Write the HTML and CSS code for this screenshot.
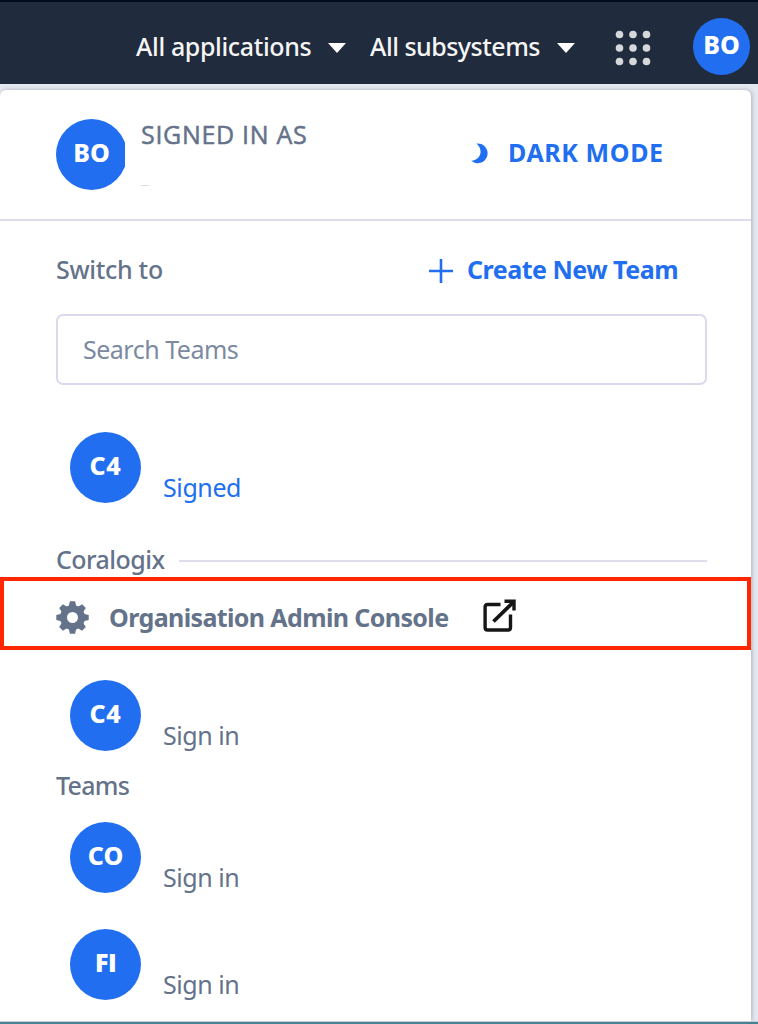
FILE: index.html
```html
<!DOCTYPE html>
<html lang="en">
<head>
<meta charset="utf-8">
<title>Teams</title>
<link rel="stylesheet" href="styles.css">
</head>
<body>
<header class="nav">
  <div class="filter apps"><span class="label apps-label">All applications</span><svg class="caret" width="18" height="10" viewBox="0 0 18 10"><path d="M0 0H18L9 10Z" fill="#fff"/></svg></div>
  <div class="filter subs"><span class="label subs-label">All subsystems</span><svg class="caret" width="18" height="10" viewBox="0 0 18 10"><path d="M0 0H18L9 10Z" fill="#fff"/></svg></div>
  <svg class="grid-icon" width="36" height="36" viewBox="0 0 36 36" fill="#d6d7da"><circle cx="4.5" cy="4.5" r="3.8"/><circle cx="18" cy="4.5" r="3.8"/><circle cx="31.5" cy="4.5" r="3.8"/><circle cx="4.5" cy="18" r="3.8"/><circle cx="18" cy="18" r="3.8"/><circle cx="31.5" cy="18" r="3.8"/><circle cx="4.5" cy="31.5" r="3.8"/><circle cx="18" cy="31.5" r="3.8"/><circle cx="31.5" cy="31.5" r="3.8"/></svg>
  <div class="avatar small"><span>BO</span></div>
</header>
<main class="panel">
  <section class="profile">
    <div class="clip"><div class="avatar"><span>BO</span></div></div>
    <div class="identity"><span class="label signed-as">SIGNED IN AS</span><i class="dash"></i></div>
    <svg class="moon" width="18" height="21" viewBox="0 0 18 21"><path d="M5.500 .5A9.900 9.900 0 1 1 .2 17.800C9.500 17 13 7.500 5.500 .5Z" fill="#216ff0"/></svg>
    <span class="label dark-mode">DARK MODE</span>
  </section>
  <section class="switch">
    <span class="label switch-label">Switch to</span>
    <svg class="plus" width="26" height="26" viewBox="0 0 26 26"><path d="M1 13H25M13 1V25" stroke="#216ff0" stroke-width="2.6"/></svg>
    <span class="label create">Create New Team</span>
  </section>
  <div class="search"><span class="label search-label">Search Teams</span></div>
  <div class="team current"><div class="avatar"><span class="c4">C4</span></div><span class="label signed">Signed</span></div>
  <div class="group"><span class="label coralogix">Coralogix</span><i class="rule"></i></div>
  <div class="admin">
    <svg class="gear" width="33" height="33" viewBox="-16.500 -16.500 33 33"><g fill="#64728a"><path id="t" d="M-4 -10L-2.600 -16.200H2.600L4 -10Z"/><use href="#t" transform="rotate(45)"/><use href="#t" transform="rotate(90)"/><use href="#t" transform="rotate(135)"/><use href="#t" transform="rotate(180)"/><use href="#t" transform="rotate(225)"/><use href="#t" transform="rotate(270)"/><use href="#t" transform="rotate(315)"/></g><circle r="9" fill="none" stroke="#64728a" stroke-width="7"/></svg>
    <span class="label console">Organisation Admin Console</span>
    <svg class="external" width="34" height="34" viewBox="0 0 34 34" fill="none" stroke="#161616" stroke-width="3.400"><path d="M17.500 5.500H4.500Q2.100 5.500 2.100 8V28.500Q2.100 31 4.500 31H25Q27.500 31 27.500 28.500V15.500"/><path d="M10.500 22.500L30 3.500" stroke-width="3.800"/><path d="M21.500 2.300H31V11.500"/><path d="M26 2H31V7Z" fill="#161616" stroke="none"/></svg>
  </div>
  <div class="team first"><div class="avatar"><span class="c4">C4</span></div><span class="label signin">Sign in</span></div>
  <div class="heading"><span class="label teams">Teams</span></div>
  <div class="team second"><div class="avatar"><span>CO</span></div><span class="label signin">Sign in</span></div>
  <div class="team third"><div class="avatar"><span class="fi">FI</span></div><span class="label signin">Sign in</span></div>
</main>
<footer class="edge"></footer>
</body>
</html>
```
FILE: styles.css
```css
* { box-sizing: border-box; }
body { margin: 0; width: 758px; height: 1024px; overflow: hidden; background: #e4e8f1; font: 500 25px/32px "Noto Sans", "Open Sans", sans-serif; color: #64728a; }
svg { display: block; flex: none; }
.label { display: block; flex: none; white-space: nowrap; }
.nav { height: 84px; display: flex; align-items: flex-start; background: #202b3d; border-top: 2px solid #030b1e; color: #f5f5f5; padding-left: 136px; }
.filter { display: flex; padding-top: 28px; }
.apps { width: 234px; }
.apps-label { width: 192px; letter-spacing: -.37px; }
.subs { width: 245px; }
.subs-label { width: 187px; letter-spacing: -.5px; }
.caret { margin-top: 13px; }
.grid-icon { margin-top: 28px; }
.avatar { width: 71px; height: 71px; border-radius: 50%; background: #216ff0; color: #fff; flex: none; display: flex; justify-content: center; padding-top: 17px; font-weight: 800; letter-spacing: -.1px; }
.small { width: 57px; height: 57px; margin: 16px 0 0 42px; padding-top: 10px; }
.c4 { letter-spacing: .8px; }
.fi { font-family: "Open Sans", sans-serif; letter-spacing: -.7px; }
.panel { width: 751px; height: 931px; margin-top: 6px; background: #fff; border-radius: 6px 6px 0 0; box-shadow: 1px 0 4px #aab0bb; }
.profile { height: 131px; display: flex; align-items: flex-start; border-bottom: 2px solid #dddded; padding: 29px 0 0 56px; }
.clip { width: 69px; overflow: hidden; }
.identity { width: 330px; padding-left: 16px; }
.signed-as { margin-top: -1px; font-family: "Open Sans", sans-serif; letter-spacing: .7px; -webkit-text-stroke: .5px #64728a; }
.dash { display: block; width: 8px; height: 1px; margin-top: 35px; background: #ddd; }
.moon { margin: 24px 0 0 16px; }
.dark-mode { margin: 17px 0 0 19px; font-weight: 700; color: #216ff0; letter-spacing: .6px; }
.switch { height: 93px; padding: 31px 0 0 56px; display: flex; align-items: flex-start; }
.switch-label { width: 372px; margin-top: 1px; letter-spacing: -.3px; }
.plus { margin-top: 6px; }
.create { margin: 1px 0 0 13px; font-weight: 700; color: #216ff0; letter-spacing: -.5px; }
.search { width: 651px; height: 71px; margin-left: 56px; border: 2px solid #dcd9ed; border-radius: 7px; padding: 17px 0 0 25px; color: #7b8aa1; font-weight: 400; }
.search-label { letter-spacing: -.5px; }
.team { display: flex; align-items: flex-start; margin-left: 70px; height: 71px; font-weight: 400; }
.team .label { margin: 39px 0 0 22px; }
.current { margin-top: 47px; }
.signed { color: #216ff0; letter-spacing: -.4px; }
.signin { letter-spacing: -.45px; }
.group { margin-top: 40px; height: 34px; padding-left: 56px; display: flex; align-items: flex-start; }
.coralogix { width: 123px; letter-spacing: -.55px; }
.rule { width: 528px; height: 2px; margin-top: 17px; background: #dddded; }
.admin { height: 73px; display: flex; align-items: flex-start; border: 4px solid #ff2600; padding: 20px 0 0 52px; }
.console { width: 374px; margin: 0 0 0 20px; font-weight: 700; letter-spacing: -.62px; }
.external { margin-top: -2px; }
.first { margin-top: 30px; }
.heading { height: 71px; padding: 18px 0 0 56px; }
.teams { letter-spacing: -.7px; }
.third { margin-top: 36px; }
.edge { height: 3px; background: #478292; border-top: 1px solid #c8cbd8; }
```
